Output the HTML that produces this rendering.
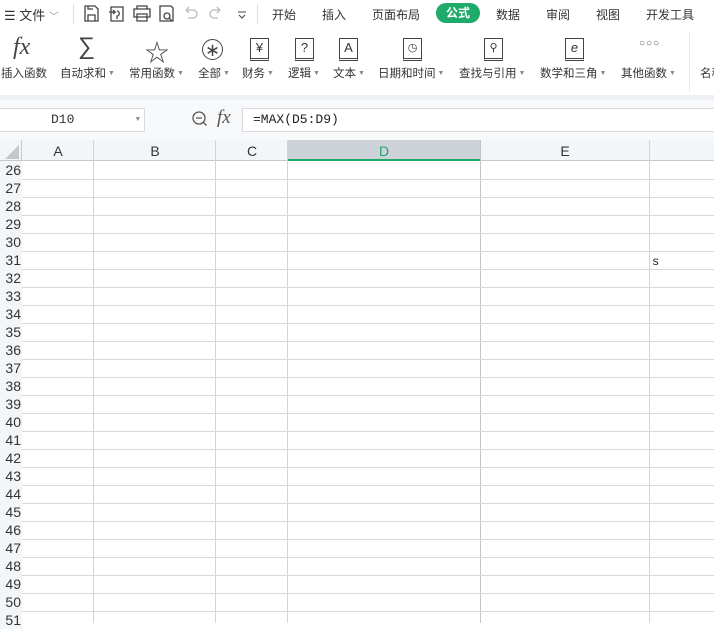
<!DOCTYPE html>
<html><head><meta charset="utf-8">
<style>
*{margin:0;padding:0;box-sizing:border-box}
body{width:714px;height:623px;overflow:hidden;background:#fff;font-family:"Liberation Sans","Noto Sans CJK SC",sans-serif;color:#333;position:relative}
.a{position:absolute;white-space:nowrap}
.t{font-size:12px;top:6px;color:#333}
.lb{font-size:11.5px;top:65px;color:#333}
.lb i{font-style:normal;font-size:7px;color:#888;margin-left:2px;vertical-align:2px}
.bk{position:absolute;top:38px;width:19px;height:23px;border:1px solid #444;border-bottom:3px double #444;font-size:13px;text-align:center;line-height:18px;color:#333}
.rh{position:absolute;left:0;width:22px;height:18px;font-size:14px;text-align:right;padding-right:1px;line-height:18px;color:#333;background:#f3f6f9;overflow:hidden}
.hl{position:absolute;left:22px;width:692px;height:1px;background:#d8d8d8}
.vl{position:absolute;top:140px;height:483px;width:1px;background:#d4d4d4}
.ch{position:absolute;top:140px;height:21px;font-size:14px;text-align:center;line-height:23px;color:#333}
</style></head><body>
<div class="a" style="left:4px;top:5px;font-size:13px">☰ 文件 <span style="font-size:10px;color:#999">﹀</span></div>
<div class="a" style="left:73px;top:4px;width:1px;height:20px;background:#e0e0e0"></div>
<svg class="a" style="left:82px;top:3px" width="170" height="22" fill="none" stroke="#444" stroke-width="1.3">
<path d="M3 3h10l3 3v12H3z M6 18v-6h7v6 M6 3v3h5"/>
<path d="M29 4h12v14H29z M27 9h6l-2-2 M33 9l-2 2 M35 8c3 0 3 5 0 5v3"/>
<path d="M55 6V3h10v3 M52 6h16v8H52z M55 11h10v7H55z"/>
<path d="M78 3h11l2 2v13H78z M85 13m-3 0a3 3 0 1 0 6 0a3 3 0 1 0-6 0 M87 15l3 3"/>
<path stroke="#bbb" d="M104 7l3-3 M104 7l3 3 M104 7h7a4 4 0 0 1 0 8h-5"/>
<path stroke="#bbb" d="M138 7l-3-3 M138 7l-3 3 M138 7h-6a4 4 0 0 0 0 8h4"/>
<path stroke-width="1" d="M156 9h8 M157 12l3 3 3-3"/>
</svg>
<div class="a" style="left:257px;top:4px;width:1px;height:20px;background:#e0e0e0"></div>
<div class="a t" style="left:272px">开始</div>
<div class="a t" style="left:322px">插入</div>
<div class="a t" style="left:372px">页面布局</div>
<div class="a" style="left:436px;top:3px;width:44px;height:20px;border-radius:10px;background:#1daa6b;color:#fff;font-size:12px;text-align:center;line-height:20px;font-weight:bold">公式</div>
<div class="a t" style="left:496px">数据</div>
<div class="a t" style="left:546px">审阅</div>
<div class="a t" style="left:596px">视图</div>
<div class="a t" style="left:646px">开发工具</div>
<div class="a" style="left:13px;top:34px;font-size:24px;font-family:'Liberation Serif',serif;font-style:italic;color:#444">fx</div>
<div class="a" style="left:78px;top:33px;font-size:24px;color:#444;font-weight:100">∑</div>
<div class="a" style="left:145px;top:33px;font-size:24px;color:#444">☆</div>
<div class="a" style="left:202px;top:39px;width:21px;height:21px;border:1.3px solid #444;border-radius:50%;font-size:18px;text-align:center;line-height:20px;color:#444">∗</div>
<div class="bk" style="left:250px">¥</div>
<div class="bk" style="left:295px">?</div>
<div class="bk" style="left:339px">A</div>
<div class="bk" style="left:403px;font-size:11px">◷</div>
<div class="bk" style="left:484px;font-size:11px">⚲</div>
<div class="bk" style="left:565px;font-style:italic">e</div>
<div class="a" style="left:639px;top:38px;font-size:10px;letter-spacing:1px;color:#555">○○○</div>
<div class="a lb" style="left:1px">插入函数</div>
<div class="a lb" style="left:60px">自动求和<i>▼</i></div>
<div class="a lb" style="left:129px">常用函数<i>▼</i></div>
<div class="a lb" style="left:198px">全部<i>▼</i></div>
<div class="a lb" style="left:242px">财务<i>▼</i></div>
<div class="a lb" style="left:288px">逻辑<i>▼</i></div>
<div class="a lb" style="left:333px">文本<i>▼</i></div>
<div class="a lb" style="left:378px">日期和时间<i>▼</i></div>
<div class="a lb" style="left:459px">查找与引用<i>▼</i></div>
<div class="a lb" style="left:540px">数学和三角<i>▼</i></div>
<div class="a lb" style="left:621px">其他函数<i>▼</i></div>
<div class="a" style="left:689px;top:32px;width:1px;height:60px;background:#e8e8e8"></div>
<div class="a lb" style="left:700px">名称</div>
<div class="a" style="left:0;top:95px;width:714px;height:5px;background:#eef0f3"></div>
<div class="a" style="left:0;top:100px;width:714px;height:40px;background:#f8f9fb"></div>
<div class="a" style="left:0;top:108px;width:145px;height:24px;background:#fff;border:1px solid #d6d9de;border-left:none;font-size:13px;font-family:'Liberation Mono',monospace;line-height:22px;padding-left:51px">D10<span style="position:absolute;right:4px;font-size:7px;color:#888">▼</span></div>
<svg class="a" style="left:191px;top:110px" width="18" height="18" fill="none" stroke="#555" stroke-width="1.3"><circle cx="8" cy="8" r="6"/><path d="M5 8h6 M12.5 12.5l3 3"/></svg>
<div class="a" style="left:217px;top:107px;font-size:19px;font-family:'Liberation Serif',serif;font-style:italic;color:#555">fx</div>
<div class="a" style="left:242px;top:108px;width:472px;height:24px;background:#fff;border:1px solid #d6d9de;border-right:none;font-size:13px;font-family:'Liberation Mono',monospace;line-height:22px;padding-left:10px;color:#222">=MAX(D5:D9)</div>
<div class="a" style="left:0;top:140px;width:714px;height:21px;background:#f3f6f9;border-bottom:1px solid #c8c8c8"></div>
<div class="a" style="left:288px;top:140px;width:192px;height:21px;background:#cdd1d8;border-bottom:2px solid #1daa6b"></div>
<svg class="a" style="left:5px;top:145px" width="14" height="14"><path d="M14 0L14 14L0 14Z" fill="#c4c8ce"/></svg>
<div class="ch" style="left:22px;width:72px">A</div>
<div class="ch" style="left:94px;width:122px">B</div>
<div class="ch" style="left:216px;width:72px">C</div>
<div class="ch" style="left:288px;width:192px;color:#1daa6b">D</div>
<div class="ch" style="left:480px;width:170px">E</div>
<div class="vl" style="left:21px;background:#c8c8c8"></div>
<div class="vl" style="left:93px"></div>
<div class="vl" style="left:215px"></div>
<div class="vl" style="left:287px"></div>
<div class="vl" style="left:480px;background:#c4c4c4"></div>
<div class="vl" style="left:649px"></div>
<div class="rh" style="top:161px">26</div><div class="hl" style="top:179px"></div>
<div class="rh" style="top:179px">27</div><div class="hl" style="top:197px"></div>
<div class="rh" style="top:197px">28</div><div class="hl" style="top:215px"></div>
<div class="rh" style="top:215px">29</div><div class="hl" style="top:233px"></div>
<div class="rh" style="top:233px">30</div><div class="hl" style="top:251px"></div>
<div class="rh" style="top:251px">31</div><div class="hl" style="top:269px"></div>
<div class="rh" style="top:269px">32</div><div class="hl" style="top:287px"></div>
<div class="rh" style="top:287px">33</div><div class="hl" style="top:305px"></div>
<div class="rh" style="top:305px">34</div><div class="hl" style="top:323px"></div>
<div class="rh" style="top:323px">35</div><div class="hl" style="top:341px"></div>
<div class="rh" style="top:341px">36</div><div class="hl" style="top:359px"></div>
<div class="rh" style="top:359px">37</div><div class="hl" style="top:377px"></div>
<div class="rh" style="top:377px">38</div><div class="hl" style="top:395px"></div>
<div class="rh" style="top:395px">39</div><div class="hl" style="top:413px"></div>
<div class="rh" style="top:413px">40</div><div class="hl" style="top:431px"></div>
<div class="rh" style="top:431px">41</div><div class="hl" style="top:449px"></div>
<div class="rh" style="top:449px">42</div><div class="hl" style="top:467px"></div>
<div class="rh" style="top:467px">43</div><div class="hl" style="top:485px"></div>
<div class="rh" style="top:485px">44</div><div class="hl" style="top:503px"></div>
<div class="rh" style="top:503px">45</div><div class="hl" style="top:521px"></div>
<div class="rh" style="top:521px">46</div><div class="hl" style="top:539px"></div>
<div class="rh" style="top:539px">47</div><div class="hl" style="top:557px"></div>
<div class="rh" style="top:557px">48</div><div class="hl" style="top:575px"></div>
<div class="rh" style="top:575px">49</div><div class="hl" style="top:593px"></div>
<div class="rh" style="top:593px">50</div><div class="hl" style="top:611px"></div>
<div class="rh" style="top:611px">51</div>
<div class="a" style="left:652px;top:255px;font-size:12px;font-family:'Liberation Mono',monospace;color:#222">s</div>
</body></html>
